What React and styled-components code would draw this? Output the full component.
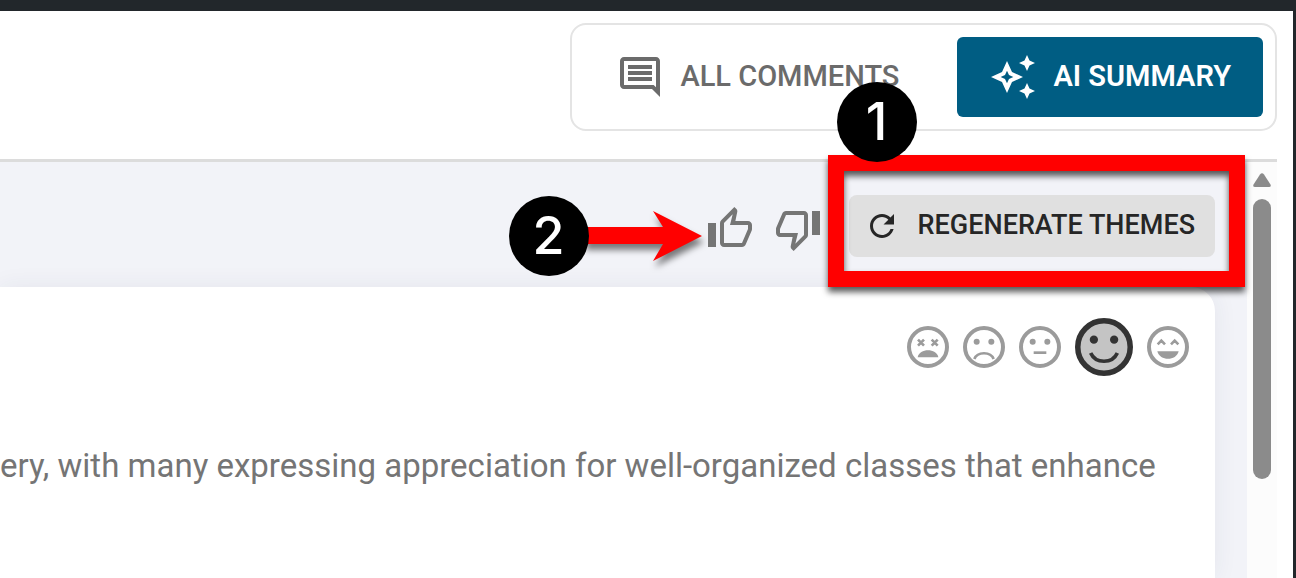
import React, { useState } from 'react';
import styled, { createGlobalStyle } from 'styled-components';

const GlobalStyle = createGlobalStyle`
  * {
    box-sizing: border-box;
  }
  body {
    margin: 0;
    font-family: Roboto, "Liberation Sans", sans-serif;
  }
  button {
    font-family: inherit;
    cursor: pointer;
  }
`

const Shell = styled.div`
  display: flex;
  min-height: 100vh;
  padding: 11px 3px 0 0;
  background-color: #22272b;
`
const Page = styled.main`
  flex: 1;
  min-width: 0;
  display: flex;
  flex-direction: column;
  padding-right: 16px;
  background-color: #fff;
`
const Header = styled.header`
  display: flex;
  justify-content: flex-end;
  padding: 12px 0 28px;
  border-bottom: 3px solid #dcdcdc;
`
const Tabs = styled.div`
  display: flex;
  gap: 26px;
  padding: 12px;
  border: 2px solid #e4e4e4;
  border-radius: 16px;
`
const Tab = styled.button`
  display: flex;
  align-items: center;
  gap: 16px;
  height: 80px;
  padding: 0 32px;
  border: none;
  border-radius: 6px;
  background-color: ${props => props.$active ? "#005d83" : "transparent"};
  color: ${props => props.$active ? "#fff" : "#6b6b6b"};
  font-size: 29px;
  font-weight: ${props => props.$active ? 600 : 500};
  line-height: 32px;
  white-space: nowrap;
`
const Label = styled.span`
  padding-bottom: 3px;
`
const Icon = styled.svg`
  display: block;
  flex: none;
  width: ${props => props.$size || 48}px;
  height: ${props => props.$size || 48}px;
  fill: currentColor;
`
const Body = styled.div`
  flex: 1;
  display: flex;
`
const Content = styled.section`
  flex: 1;
  min-width: 0;
  display: flex;
  flex-direction: column;
  padding-right: 32px;
  background-color: #f2f3f8;
`
const Actions = styled.div`
  position: relative;
  z-index: 1;
  display: flex;
  align-items: center;
  justify-content: flex-end;
  gap: 27px;
  padding: 33px 0 30px;
`
const Votes = styled.div`
  display: flex;
  gap: 20px;
  padding-top: 6px;
`
const Anchor = styled.div`
  position: relative;
`
const VoteButton = styled.button`
  display: block;
  padding: 0;
  border: none;
  background: none;
  color: #757575;
`
const RegenerateButton = styled.button`
  display: flex;
  align-items: center;
  gap: 18px;
  height: 62px;
  padding: 0 20px 0 15px;
  border: none;
  border-radius: 8px;
  background-color: #e0e0e0;
  color: #262626;
  font-size: 27px;
  font-weight: 500;
  line-height: 32px;
  white-space: nowrap;
`
const Frame = styled.div`
  position: absolute;
  top: -40px;
  right: -30px;
  bottom: -30px;
  left: -21px;
  border: 16px solid #ff0000;
  filter: drop-shadow(0 5px 3px rgba(0, 0, 0, 0.65));
  pointer-events: none;
`
const Callout = styled.div`
  position: absolute;
  top: ${props => props.$top}px;
  left: ${props => props.$left}px;
  display: flex;
  align-items: center;
  justify-content: center;
  width: 80px;
  height: 80px;
  border-radius: 50%;
  background-color: #000;
  color: #fff;
  font-family: Inter, "Liberation Sans", sans-serif;
  font-size: 52px;
  font-weight: 500;
  line-height: 60px;
  pointer-events: none;
`
const Arrow = styled.svg`
  position: absolute;
  top: 6px;
  left: -122px;
  width: 118px;
  height: 50px;
  overflow: visible;
  fill: #ff0000;
  filter: drop-shadow(2px 6px 3px rgba(0, 0, 0, 0.5));
  pointer-events: none;
`
const Card = styled.article`
  flex: 1;
  padding: 31px 26px 0 0;
  border-top-right-radius: 24px;
  background-color: #fff;
  box-shadow: 0 0 24px rgba(40, 50, 80, 0.07);
`
const Faces = styled.div`
  display: flex;
  align-items: center;
  justify-content: flex-end;
  gap: 14px;
`
const FaceButton = styled.button`
  padding: 0;
  border: none;
  border-radius: 50%;
  background: none;
  color: ${props => props.$active ? "#333" : "#9b9b9b"};
`
const Summary = styled.p`
  margin: 72px 0 0;
  color: #757575;
  font-size: 33px;
  line-height: 36px;
  white-space: nowrap;
`
const Scrollbar = styled.div`
  display: flex;
  flex-direction: column;
  align-items: center;
  gap: 12px;
  width: 30px;
  padding-top: 11px;
  background-color: #fcfcfc;
`
const ScrollUp = styled.svg`
  width: 18px;
  height: 14px;
  fill: #8b8b8b;
`
const Thumb = styled.div`
  width: 18px;
  height: 280px;
  border-radius: 9px;
  background-color: #8b8b8b;
`

const paths = {
  comment: "M21.99 4c0-1.1-.89-2-1.99-2H4c-1.1 0-2 .9-2 2v12c0 1.1.9 2 2 2h14l4 4-.01-18zM20 4v13.17L18.83 16H4V4h16zM6 12h12v2H6zm0-3h12v2H6zm0-3h12v2H6z",
  sparkle: "M19 9l1.25-2.75L23 5l-2.75-1.25L19 1l-1.25 2.75L15 5l2.75 1.25zm0 6l-1.25 2.75L15 19l2.75 1.25L19 23l1.25-2.75L23 19l-2.75-1.25zm-7.5-5.5L9 4 6.5 9.5 1 12l5.5 2.5L9 20l2.5-5.5L17 12l-5.5-2.5zm-1.51 3.49L9 15.17l-.99-2.18L5.83 12l2.18-.99L9 8.83l.99 2.18 2.18.99-2.18.99z",
  thumbUp: "M9 21h9c.83 0 1.54-.5 1.84-1.22l3.02-7.05c.09-.23.14-.47.14-.73v-2c0-1.1-.9-2-2-2h-6.31l.95-4.57.03-.32c0-.41-.17-.79-.44-1.06L14.17 1 7.58 7.59C7.22 7.95 7 8.45 7 9v10c0 1.1.9 2 2 2zM9 9l4.34-4.34L12 10h9v2l-3 7H9V9zM1 9h4v12H1z",
  thumbDown: "M15 3H6c-.83 0-1.54.5-1.84 1.22l-3.02 7.05c-.09.23-.14.47-.14.73v2c0 1.1.9 2 2 2h6.31l-.95 4.57-.03.32c0 .41.17.79.44 1.06L9.83 23l6.59-6.59c.36-.36.58-.86.58-1.41V5c0-1.1-.9-2-2-2zm0 12l-4.34 4.34L12 14H3v-2l3-7h9v10zm4-12h4v12h-4z",
  refresh: "M17.65 6.35C16.2 4.9 14.21 4 12 4c-4.42 0-7.99 3.58-7.99 8s3.57 8 7.99 8c3.73 0 6.84-2.55 7.73-6h-2.08c-.82 2.33-3.04 4-5.65 4-3.31 0-6-2.69-6-6s2.69-6 6-6c1.66 0 3.14.69 4.22 1.78L13 11h7V4l-2.35 2.35z",
}

const MaterialIcon = ({name, size}) => (
  <Icon viewBox="0 0 24 24" $size={size} aria-hidden="true">
    <path d={paths[name]}/>
  </Icon>
)

const dotEyes = (
  <>
    <circle cx="-22" cy="-16" r="9"/>
    <circle cx="22" cy="-16" r="9"/>
  </>
)
const line = { fill: "none", stroke: "currentColor", strokeWidth: 8 }

const faces = [
  {
    name: "Very negative",
    art: (
      <>
        <path d="M-30 -22l18 18m0 -18l-18 18M11 -22l18 18m0 -18l-18 18" {...line}/>
        <path d="M-31 31C-26 3 26 3 31 31z"/>
      </>
    ),
  },
  {
    name: "Negative",
    art: <>{dotEyes}<path d="M-29 36C-20 13 20 13 29 36" {...line}/></>,
  },
  {
    name: "Neutral",
    art: <>{dotEyes}<path d="M-19 17h38" {...line}/></>,
  },
  {
    name: "Positive",
    art: <>{dotEyes}<path d="M-29 13C-18 37 18 37 29 13" {...line}/></>,
  },
  {
    name: "Very positive",
    art: (
      <>
        <path d="M-31 -8l11 -11 11 11M9 -8l11 -11 11 11" {...line}/>
        <path d="M-32 13h64C25 43 -25 43 -32 13z"/>
      </>
    ),
  },
]

const Face = ({face, active, onClick}) => (
  <FaceButton type="button" aria-label={face.name} aria-pressed={active} $active={active} onClick={onClick}>
    <Icon viewBox="-63 -63 126 126" $size={active ? 58 : 42} aria-hidden="true">
      <circle r="57" fill={active ? "#c4c4c4" : "none"} stroke="currentColor" strokeWidth="12"/>
      {face.art}
    </Icon>
  </FaceButton>
)

export default function App() {
  const [tab, setTab] = useState("summary");
  const [rating, setRating] = useState(3);

  return (
    <Shell>
      <GlobalStyle/>
      <Page>
        <Header>
          <Tabs>
            <Tab type="button" $active={tab === "comments"} onClick={() => setTab("comments")}>
              <MaterialIcon name="comment"/>
              <Label>ALL COMMENTS</Label>
            </Tab>
            <Tab type="button" $active={tab === "summary"} onClick={() => setTab("summary")}>
              <MaterialIcon name="sparkle"/>
              <Label>AI SUMMARY</Label>
            </Tab>
          </Tabs>
        </Header>
        <Body>
          <Content>
            <Actions>
              <Votes>
                <Anchor>
                  <VoteButton type="button" aria-label="Helpful">
                    <MaterialIcon name="thumbUp"/>
                  </VoteButton>
                  <Arrow viewBox="0 0 118 50" aria-hidden="true">
                    <path d="M0 16H79L69 0L118 25L69 50L79 33H0z"/>
                  </Arrow>
                  <Callout $top={-9} $left={-197}>2</Callout>
                </Anchor>
                <VoteButton type="button" aria-label="Not helpful">
                  <MaterialIcon name="thumbDown"/>
                </VoteButton>
              </Votes>
              <Anchor>
                <RegenerateButton type="button">
                  <MaterialIcon name="refresh" size={36}/>
                  <Label>REGENERATE THEMES</Label>
                </RegenerateButton>
                <Frame/>
                <Callout $top={-113} $left={-12}>1</Callout>
              </Anchor>
            </Actions>
            <Card>
              <Faces>
                {faces.map((face, i) => (
                  <Face key={face.name} face={face} active={i === rating} onClick={() => setRating(i)}/>
                ))}
              </Faces>
              <Summary>
                ery, with many expressing appreciation for well-organized classes that enhance
              </Summary>
            </Card>
          </Content>
          <Scrollbar>
            <ScrollUp viewBox="0 0 18 14" aria-hidden="true">
              <path d="M7 1.500Q9 -1 11 1.500L17.500 11.500Q18.500 14 16 14H2Q-.5 14 .5 11.500z"/>
            </ScrollUp>
            <Thumb/>
          </Scrollbar>
        </Body>
      </Page>
    </Shell>
  );
}
